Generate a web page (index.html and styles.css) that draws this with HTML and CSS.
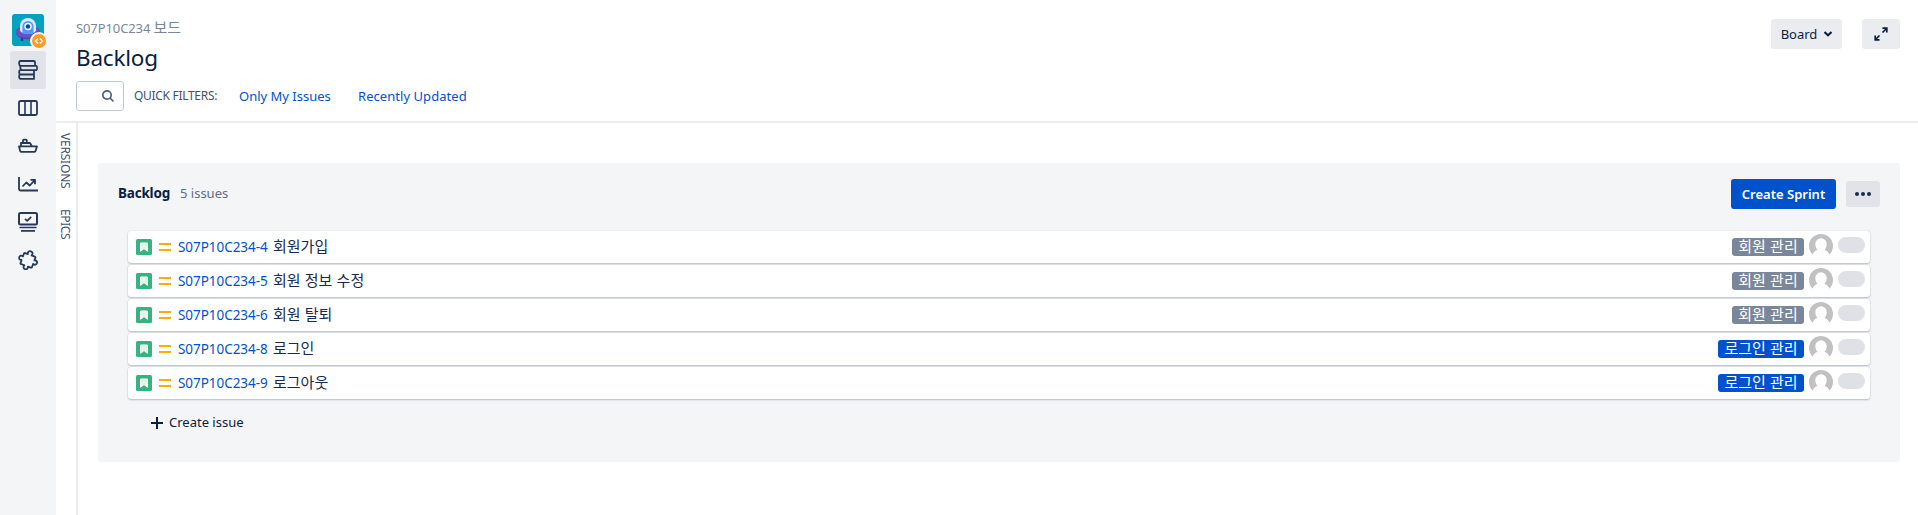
FILE: index.html
```html
<!DOCTYPE html>
<html lang="ko">
<head>
<meta charset="utf-8">
<title>Backlog</title>
<link rel="stylesheet" href="styles.css">
</head>
<body>
<svg class="defs" width="0" height="0">
  <symbol id="story" viewBox="0 0 16 16"><rect width="16" height="16" rx="1.500" fill="#36b37e"/><path d="M4.500 4h7v8.300L8 9.600l-3.500 2.700z" fill="#e3f6ed" stroke="#fff" stroke-width="1" stroke-linejoin="round"/></symbol>
  <symbol id="medium" viewBox="0 0 12 8"><path d="M0 1h12M0 7h12" stroke="#ffab00" stroke-width="2"/></symbol>
  <symbol id="avatar" viewBox="0 0 24 24"><circle cx="12" cy="12" r="12" fill="#c1c1c1"/><path d="M12 4.300a5.700 5.700 0 0 0-5.700 5.700c0 2.500.8 4.400 2.300 5.800C5.500 17 3.800 19 3.200 22v2h17.600v-2c-.6-3-2.300-5-5.400-6.200 1.500-1.400 2.300-3.300 2.300-5.800A5.700 5.700 0 0 0 12 4.300z" fill="#fff"/></symbol>
</svg>
<div class="app">
  <nav class="sidebar">
    <a class="project">
      <svg width="32" height="32" viewBox="0 0 32 32"><rect width="32" height="32" rx="3" fill="#00a3bf"/><path d="M10 23v4M22 23v4" stroke="#403294" stroke-width="2.500"/><ellipse cx="16" cy="18" rx="12.500" ry="6.500" fill="#6554c0"/><path d="M4 20c5 5 19 5 24 0-3 7-20 7-24 0z" fill="#5243aa"/><path d="M8 12a8 8 0 0 1 16 0v5c-3 4-13 4-16 0z" fill="#deebff"/><path d="M10.500 12.500a5.500 5.500 0 0 1 11 0V19c-3 1.500-8 1.500-11 0z" fill="#4c9aff"/><circle cx="16" cy="12.500" r="3.700" fill="#fff"/><circle cx="16" cy="12.500" r="2.300" fill="#0747a6"/></svg>
      <span class="badge"><svg width="10" height="8" viewBox="0 0 10 8" fill="none" stroke="#fff" stroke-width="1.500"><path d="M4 1.500 1.500 4 4 6.500M6 1.500 8.500 4 6 6.500"/></svg></span>
    </a>
    <a class="item selected"><svg width="20" height="20" viewBox="0 0 20 20"><path d="M2.500 1h13.300c.7 0 1.200.5 1.200 1.200v3.600H2.500C.6 5.500.6 1.200 2.500 1zM2.500 5.800h15.700c1.100 0 1.100 4.300 0 4.300H4c-1.500 0-2-2.500-1.500-4.300zM2.500 10.100H16v4.400H2.500c-1.800 0-1.800-4.400 0-4.400zM2.500 14.500H16v4.400H2.500c-1.800 0-1.800-4.400 0-4.400z" stroke-width="1.800"/></svg></a>
    <a class="item"><svg width="20" height="20" viewBox="0 0 20 20"><rect x="1" y="3" width="18" height="14" rx="1.500" stroke-width="1.800"/><path d="M7 3v14M13 3v14" stroke-width="1.600"/></svg></a>
    <a class="item"><svg width="20" height="20" viewBox="0 0 20 20"><path d="M1 10.300h18l-1.400 4.500a1.600 1.600 0 0 1-1.500 1H3.600a1.600 1.600 0 0 1-1.500-1zM3 10V7h9l1.800 3M5 6.800V4.500c0-.6.400-.9.900-.9h2c.5 0 .9.300.9.900v2.300" stroke-width="1.800"/></svg></a>
    <a class="item"><svg width="20" height="20" viewBox="0 0 20 20"><path d="M1 3v12a1.500 1.500 0 0 0 1.500 1.500H20M4.500 12.500l3.800-4 3.500 3 5-5.500M12.500 5.800H17v4.500" stroke-width="1.800"/></svg></a>
    <a class="item"><svg width="20" height="20" viewBox="0 0 20 20"><rect x="1" y="1" width="18" height="11.500" rx="1.500"/><path d="m7 6.800 2.200 2 4-4" stroke-width="1.800"/><path d="M1.500 15.500h17M3 18.800h14" stroke-width="1.700"/></svg></a>
    <a class="item"><svg width="20" height="20" viewBox="0 0 20 20"><path transform="rotate(20 10 10)" d="M7.800 4.500C6.700 2.200 8 .8 9.800.8s3 1.400 2 3.700h3.400c.7 0 1 .4 1 1v2.700c2.100-1 3.300.2 3.300 1.800s-1.200 2.800-3.300 1.800v3.400c0 .6-.4 1-1 1h-3c.8 2.400-.4 3.400-1.900 3.400s-2.700-1-1.900-3.400H5c-.6 0-1-.4-1-1v-3c-2 .8-3.200-.4-3.200-2S2 7.600 4 8.400V5.500c0-.6.400-1 1-1z" stroke-width="1.800"/></svg></a>
  </nav>
  <div class="main">
    <header class="header">
      <div class="heading">
        <div class="crumb">S07P10C234 <span class="ko">보드</span></div>
        <h1>Backlog</h1>
        <div class="filters">
          <div class="search"><svg width="14" height="14" viewBox="0 0 14 14"><circle cx="6" cy="6" r="4.200"/><path d="m9 9 3.500 3.500"/></svg></div>
          <span class="quick">QUICK FILTERS:</span>
          <a class="mine">Only My Issues</a>
          <a class="recent">Recently Updated</a>
        </div>
      </div>
      <div class="tools">
        <button class="board"><span>Board</span><svg width="8" height="6" viewBox="0 0 8 6"><path d="m.5 1 3.500 3.300L7.500 1"/></svg></button>
        <button class="expand"><svg width="14" height="14" viewBox="0 0 14 14"><path d="M8.500 5.500 12 2M8.500 1.200h4.300v4.300M5.500 8.500 2 12M1.200 8.500v4.300h4.300"/></svg></button>
      </div>
    </header>
    <div class="body">
      <aside class="tabs"><span class="versions">VERSIONS</span><span class="epics">EPICS</span></aside>
      <section class="panel">
        <div class="panel-head">
          <h2>Backlog</h2><span class="count">5 issues</span>
          <button class="create"><span>Create Sprint</span></button>
          <button class="more"><svg width="16" height="4" viewBox="0 0 16 4"><circle cx="2" cy="2" r="2"/><circle cx="8" cy="2" r="2"/><circle cx="14" cy="2" r="2"/></svg></button>
        </div>
        <div class="issues">
          <div class="issue"><svg class="type"><use href="#story"/></svg><svg class="priority"><use href="#medium"/></svg><a class="key">S07P10C234-4</a><span class="summary">회원가입</span><span class="epic gray">회원 관리</span><svg class="avatar"><use href="#avatar"/></svg><span class="estimate"></span></div>
          <div class="issue"><svg class="type"><use href="#story"/></svg><svg class="priority"><use href="#medium"/></svg><a class="key">S07P10C234-5</a><span class="summary">회원 정보 수정</span><span class="epic gray">회원 관리</span><svg class="avatar"><use href="#avatar"/></svg><span class="estimate"></span></div>
          <div class="issue"><svg class="type"><use href="#story"/></svg><svg class="priority"><use href="#medium"/></svg><a class="key">S07P10C234-6</a><span class="summary">회원 탈퇴</span><span class="epic gray">회원 관리</span><svg class="avatar"><use href="#avatar"/></svg><span class="estimate"></span></div>
          <div class="issue"><svg class="type"><use href="#story"/></svg><svg class="priority"><use href="#medium"/></svg><a class="key">S07P10C234-8</a><span class="summary">로그인</span><span class="epic blue">로그인 관리</span><svg class="avatar"><use href="#avatar"/></svg><span class="estimate"></span></div>
          <div class="issue"><svg class="type"><use href="#story"/></svg><svg class="priority"><use href="#medium"/></svg><a class="key">S07P10C234-9</a><span class="summary">로그아웃</span><span class="epic blue">로그인 관리</span><svg class="avatar"><use href="#avatar"/></svg><span class="estimate"></span></div>
        </div>
        <div class="new-issue"><svg width="12" height="12" viewBox="0 0 12 12"><path d="M6 0v12M0 6h12"/></svg><span>Create issue</span></div>
      </section>
    </div>
  </div>
</div>
</body>
</html>
```
FILE: styles.css
```css
* { box-sizing: border-box; }
body { margin: 0; background: #fff; color: #172b4d; font: 13px/20px "Noto Sans", "Noto Sans CJK KR", sans-serif; overflow: hidden; white-space: nowrap; }
svg { display: block; flex: none; fill: none; }
.defs { position: absolute; }
h1, h2 { margin: 0; }
button { border: 0; padding: 0; border-radius: 3px; color: #172b4d; font: inherit; display: flex; align-items: center; justify-content: center; }
.app { display: flex; height: 515px; }
.sidebar { width: 56px; flex: none; background: #f4f5f7; padding-top: 14px; display: flex; flex-direction: column; align-items: center; }
.project { position: relative; margin-bottom: 5px; }
.badge { position: absolute; left: 18px; top: 18px; width: 18px; height: 18px; border-radius: 50%; border: 2px solid #f4f5f7; background: #ff991f; display: flex; align-items: center; justify-content: center; }
.item { width: 36px; height: 38px; border-radius: 3px; display: flex; align-items: center; justify-content: center; stroke: #253858; stroke-width: 2; stroke-linejoin: round; }
.selected { background: #e2e3e9; }
.main { flex: 1; display: flex; flex-direction: column; }
.header { height: 123px; border-bottom: 2px solid #ebecf0; display: flex; justify-content: space-between; padding: 17px 18px 0 20px; }
.crumb { height: 20px; color: #7a869a; letter-spacing: -.1px; }
.ko { font-size: 15px; letter-spacing: 0; }
h1 { font-size: 22.500px; font-weight: 400; line-height: 28px; height: 28px; margin-top: 7px; letter-spacing: -.2px; color: #091e42; }
.filters { display: flex; align-items: center; margin-top: 9px; line-height: 20px; }
.search { width: 48px; height: 30px; border: 1px solid #c1c7d0; border-radius: 3px; display: flex; align-items: center; justify-content: flex-end; padding-right: 8px; stroke: #505f79; stroke-width: 1.700; }
.quick { margin-left: 10px; width: 105px; font-size: 12px; color: #42526e; letter-spacing: -.3px; }
.mine { width: 119px; color: #0052cc; }
.recent { color: #0052cc; letter-spacing: .05px; }
.tools { display: flex; gap: 20px; margin-top: 2px; }
.board { width: 71px; height: 30px; background: #ebecf0; gap: 7px; color: #091e42; }
.board svg, .expand svg { stroke: #091e42; stroke-width: 2; }
.expand { width: 38px; height: 30px; background: #ebecf0; }
.expand svg { stroke-width: 1.700; }
.body { flex: 1; display: flex; }
.tabs { width: 22px; border-right: 2px solid #ebecf0; padding: 10px 1px 0 0; writing-mode: vertical-rl; font-size: 12px; color: #42526e; display: flex; flex-direction: row; }
.versions { height: 76px; letter-spacing: -.2px; }
.epics { letter-spacing: -.4px; }
.panel { margin: 40px 18px 0 20px; flex: 1; height: 299px; background: #f4f5f7; border-radius: 3px; padding: 16px 20px 0; }
.panel-head { height: 30px; display: flex; align-items: center; }
h2 { font-size: 13.500px; line-height: 20px; width: 62px; padding-bottom: 2px; color: #091e42; letter-spacing: -.2px; }
.count { flex: 1; padding-bottom: 2px; color: #5e6c84; }
.create { width: 105px; height: 30px; background: #0052cc; color: #fff; font-weight: 600; }
.more { width: 34px; height: 26px; margin-left: 10px; background: #e2e3e9; }
.more svg { fill: #172b4d; }
.issues { margin: 22px 10px 0; display: flex; flex-direction: column; gap: 2px; }
.issue { height: 32px; background: #fff; border-radius: 3px; box-shadow: 0 1px 2px rgba(9,30,66,.25), 0 0 1px rgba(9,30,66,.2); display: flex; align-items: center; padding: 0 5px 0 8px; }
.type { width: 16px; height: 16px; }
.priority { width: 12px; height: 8px; margin: 0 7px; }
.key { width: 95px; padding-bottom: 1px; color: #0052cc; font-size: 13.500px; letter-spacing: -.05px; }
.summary { flex: 1; padding-bottom: 2px; font-family: "Noto Sans CJK KR", sans-serif; font-size: 15px; }
.epic { height: 18px; line-height: 16px; border-radius: 3px; text-align: center; color: #fff; font-family: "Noto Sans CJK KR", sans-serif; font-size: 15px; }
.gray { width: 72px; background: #7a869a; }
.blue { width: 86px; background: #0052cc; }
.avatar { width: 24px; height: 24px; margin: 3px 5px 0; align-self: flex-start; }
.estimate { width: 27px; height: 16px; border-radius: 8px; background: #dfe1e6; margin-bottom: 4px; }
.new-issue { display: flex; align-items: center; gap: 6px; margin: 14px 0 0 33px; height: 20px; color: #091e42; }
.new-issue span { padding-bottom: 2px; }
.new-issue svg { stroke: #091e42; stroke-width: 2; }
```
